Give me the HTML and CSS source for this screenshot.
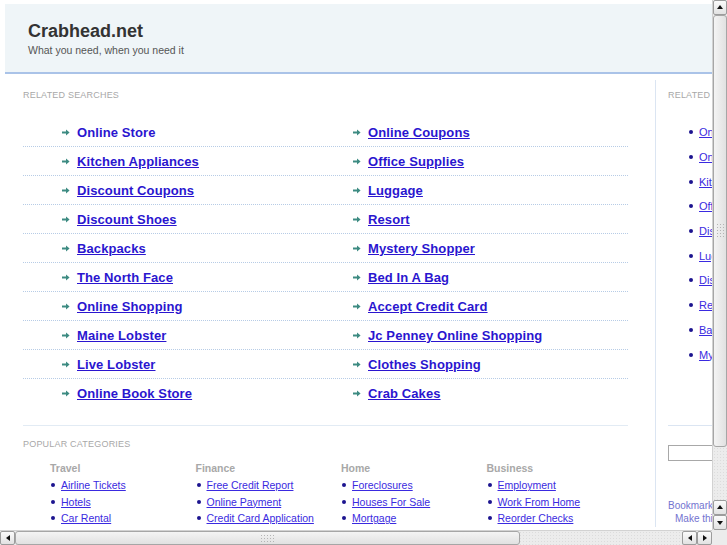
FILE: index.html
```html
<!DOCTYPE html>
<html lang="en">
<head>
  <meta charset="UTF-8" />
  <title>Crabhead.net</title>
  <link rel="stylesheet" href="styles.css">
</head>
<body>
  <div class="window">
    <div class="viewport">
      <div class="page">
        <div class="header">
          <div class="site-name">Crabhead.net</div>
          <div class="tagline">What you need, when you need it</div>
        </div>
        <div class="content">
          <div class="main">
            <div class="section-title">Related Searches</div>
            <div class="searches">
              <div class="search-row">
                <a class="search-link plain" href="#"><svg class="arrow" viewBox="0 0 8 7"><path d="M0 2.6h4V0.4L7.6 3.5 4 6.6V4.4H0z"/></svg><span>Online Store</span></a>
                <a class="search-link" href="#"><svg class="arrow" viewBox="0 0 8 7"><path d="M0 2.6h4V0.4L7.6 3.5 4 6.6V4.4H0z"/></svg><span>Online Coupons</span></a>
              </div>
              <div class="search-row">
                <a class="search-link" href="#"><svg class="arrow" viewBox="0 0 8 7"><path d="M0 2.6h4V0.4L7.6 3.5 4 6.6V4.4H0z"/></svg><span>Kitchen Appliances</span></a>
                <a class="search-link" href="#"><svg class="arrow" viewBox="0 0 8 7"><path d="M0 2.6h4V0.4L7.6 3.5 4 6.6V4.4H0z"/></svg><span>Office Supplies</span></a>
              </div>
              <div class="search-row">
                <a class="search-link" href="#"><svg class="arrow" viewBox="0 0 8 7"><path d="M0 2.6h4V0.4L7.6 3.5 4 6.6V4.4H0z"/></svg><span>Discount Coupons</span></a>
                <a class="search-link" href="#"><svg class="arrow" viewBox="0 0 8 7"><path d="M0 2.6h4V0.4L7.6 3.5 4 6.6V4.4H0z"/></svg><span>Luggage</span></a>
              </div>
              <div class="search-row">
                <a class="search-link" href="#"><svg class="arrow" viewBox="0 0 8 7"><path d="M0 2.6h4V0.4L7.6 3.5 4 6.6V4.4H0z"/></svg><span>Discount Shoes</span></a>
                <a class="search-link" href="#"><svg class="arrow" viewBox="0 0 8 7"><path d="M0 2.6h4V0.4L7.6 3.5 4 6.6V4.4H0z"/></svg><span>Resort</span></a>
              </div>
              <div class="search-row">
                <a class="search-link" href="#"><svg class="arrow" viewBox="0 0 8 7"><path d="M0 2.6h4V0.4L7.6 3.5 4 6.6V4.4H0z"/></svg><span>Backpacks</span></a>
                <a class="search-link" href="#"><svg class="arrow" viewBox="0 0 8 7"><path d="M0 2.6h4V0.4L7.6 3.5 4 6.6V4.4H0z"/></svg><span>Mystery Shopper</span></a>
              </div>
              <div class="search-row">
                <a class="search-link" href="#"><svg class="arrow" viewBox="0 0 8 7"><path d="M0 2.6h4V0.4L7.6 3.5 4 6.6V4.4H0z"/></svg><span>The North Face</span></a>
                <a class="search-link" href="#"><svg class="arrow" viewBox="0 0 8 7"><path d="M0 2.6h4V0.4L7.6 3.5 4 6.6V4.4H0z"/></svg><span>Bed In A Bag</span></a>
              </div>
              <div class="search-row">
                <a class="search-link" href="#"><svg class="arrow" viewBox="0 0 8 7"><path d="M0 2.6h4V0.4L7.6 3.5 4 6.6V4.4H0z"/></svg><span>Online Shopping</span></a>
                <a class="search-link" href="#"><svg class="arrow" viewBox="0 0 8 7"><path d="M0 2.6h4V0.4L7.6 3.5 4 6.6V4.4H0z"/></svg><span>Accept Credit Card</span></a>
              </div>
              <div class="search-row">
                <a class="search-link" href="#"><svg class="arrow" viewBox="0 0 8 7"><path d="M0 2.6h4V0.4L7.6 3.5 4 6.6V4.4H0z"/></svg><span>Maine Lobster</span></a>
                <a class="search-link" href="#"><svg class="arrow" viewBox="0 0 8 7"><path d="M0 2.6h4V0.4L7.6 3.5 4 6.6V4.4H0z"/></svg><span>Jc Penney Online Shopping</span></a>
              </div>
              <div class="search-row">
                <a class="search-link" href="#"><svg class="arrow" viewBox="0 0 8 7"><path d="M0 2.6h4V0.4L7.6 3.5 4 6.6V4.4H0z"/></svg><span>Live Lobster</span></a>
                <a class="search-link" href="#"><svg class="arrow" viewBox="0 0 8 7"><path d="M0 2.6h4V0.4L7.6 3.5 4 6.6V4.4H0z"/></svg><span>Clothes Shopping</span></a>
              </div>
              <div class="search-row">
                <a class="search-link" href="#"><svg class="arrow" viewBox="0 0 8 7"><path d="M0 2.6h4V0.4L7.6 3.5 4 6.6V4.4H0z"/></svg><span>Online Book Store</span></a>
                <a class="search-link" href="#"><svg class="arrow" viewBox="0 0 8 7"><path d="M0 2.6h4V0.4L7.6 3.5 4 6.6V4.4H0z"/></svg><span>Crab Cakes</span></a>
              </div>
            </div>

            <div class="section-title popular">Popular Categories</div>
            <div class="categories">
              <div class="category">
                <div class="cat-name">Travel</div>
                <ul class="cat-links">
                  <li><a href="#">Airline Tickets</a></li>
                  <li><a href="#">Hotels</a></li>
                  <li><a href="#">Car Rental</a></li>
                </ul>
              </div>
              <div class="category">
                <div class="cat-name">Finance</div>
                <ul class="cat-links">
                  <li><a href="#">Free Credit Report</a></li>
                  <li><a href="#">Online Payment</a></li>
                  <li><a href="#">Credit Card Application</a></li>
                </ul>
              </div>
              <div class="category">
                <div class="cat-name">Home</div>
                <ul class="cat-links">
                  <li><a href="#">Foreclosures</a></li>
                  <li><a href="#">Houses For Sale</a></li>
                  <li><a href="#">Mortgage</a></li>
                </ul>
              </div>
              <div class="category">
                <div class="cat-name">Business</div>
                <ul class="cat-links">
                  <li><a href="#">Employment</a></li>
                  <li><a href="#">Work From Home</a></li>
                  <li><a href="#">Reorder Checks</a></li>
                </ul>
              </div>
            </div>
          </div>

          <div class="side">
            <div class="section-title">Related Searches</div>
            <ul class="side-links">
              <li><a href="#">Online Store</a></li>
              <li><a href="#">Online Coupons</a></li>
              <li><a href="#">Kitchen Appliances</a></li>
              <li><a href="#">Office Supplies</a></li>
              <li><a href="#">Discount Coupons</a></li>
              <li><a href="#">Luggage</a></li>
              <li><a href="#">Discount Shoes</a></li>
              <li><a href="#">Resort</a></li>
              <li><a href="#">Backpacks</a></li>
              <li><a href="#">Mystery Shopper</a></li>
            </ul>
            <div class="side-search">
              <input class="search-box" type="text" />
            </div>
            <div class="bookmark">
              <a href="#">Bookmark this page</a>
              <a class="make-home" href="#">Make this your homepage</a>
            </div>
          </div>
        </div>
      </div>
    </div>

    <div class="vscroll">
      <div class="sb-btn"><span class="tri up"></span></div>
      <div class="sb-thumb v-thumb"><span class="grip"></span></div>
      <div class="sb-track"></div>
      <div class="sb-btn"><span class="tri up"></span></div>
      <div class="sb-btn"><span class="tri down"></span></div>
    </div>
    <div class="hscroll">
      <div class="sb-btn"><span class="tri left"></span></div>
      <div class="sb-thumb h-thumb"><span class="grip"></span></div>
      <div class="sb-track"></div>
      <div class="sb-btn"><span class="tri left"></span></div>
      <div class="sb-btn"><span class="tri right"></span></div>
    </div>
    <div class="corner"></div>
  </div>
</body>
</html>
```

FILE: styles.css
```css
body {
  margin: 0;
  padding: 0;
  overflow: hidden;
  background: #fff;
  font-family: "Liberation Sans", Arial, sans-serif;
}
.window {
  display: grid;
  grid-template-columns: 712px 15px;
  grid-template-rows: 530px 15px;
  width: 727px;
  height: 545px;
}
.viewport {
  overflow: hidden;
  background: #fff;
}
.page {
  width: 1000px;
  padding: 4px 0 0 5px;
}

/* header */
.header {
  background: #eff5f8;
  border-bottom: 2px solid #aac3e8;
  height: 70px;
  padding: 0 0 0 23px;
  box-sizing: border-box;
}
.site-name {
  padding-top: 16px;
  font-size: 18px;
  font-weight: bold;
  color: #333;
  line-height: 22px;
}
.tagline {
  font-size: 10.5px;
  color: #555;
  line-height: 14px;
  margin-top: 1px;
}

.content {
  display: flex;
}
.main {
  width: 605px;
  padding: 0 27px 0 18px;
}
.section-title {
  font-size: 9px;
  color: #a8a8a8;
  text-transform: uppercase;
  letter-spacing: 0.2px;
  line-height: 12px;
  margin-top: 15px;
  white-space: nowrap;
}
.section-title.popular {
  margin-top: 12px;
}

/* related searches */
.searches {
  margin-top: 17px;
  border-bottom: 1px solid #e2ebf4;
  padding-bottom: 17px;
}
.search-row {
  display: grid;
  grid-template-columns: 291px 1fr;
  padding-left: 39px;
  height: 29px;
  align-items: center;
  border-bottom: 1px dotted #b7cce6;
  box-sizing: border-box;
}
.search-row:last-child {
  border-bottom: none;
}
.search-link {
  display: flex;
  align-items: center;
  gap: 7px;
  font-size: 13px;
  font-weight: bold;
  color: #2a15cf;
  text-decoration: none;
  letter-spacing: 0.1px;
}
.search-link span {
  text-decoration: underline;
}
.search-link.plain span {
  text-decoration: none;
}
.arrow {
  width: 8px;
  height: 7px;
  fill: #3d8b82;
  flex-shrink: 0;
}

/* popular categories */
.categories {
  display: grid;
  grid-template-columns: repeat(4, 145.5px);
  padding-left: 27px;
  margin-top: 12px;
}
.cat-name {
  font-size: 10.5px;
  font-weight: bold;
  color: #a8a8a8;
  line-height: 13px;
}
.cat-links {
  list-style: none;
  margin: 2px 0 0 1px;
  padding: 0;
}
.cat-links li {
  display: flex;
  align-items: center;
  gap: 6px;
  height: 16.5px;
  font-size: 10.5px;
  white-space: nowrap;
}
.cat-links li::before,
.side-links li::before {
  content: "";
  width: 4px;
  height: 4px;
  border-radius: 50%;
  background: #1c148f;
  flex-shrink: 0;
}
.cat-links a {
  color: #3a2ae0;
}

/* sidebar */
.side {
  border-left: 1px solid #dbe5f2;
  margin-top: 6px;
  padding-left: 12px;
  width: 240px;
}
.side .section-title {
  margin-top: 9px;
}
.side-links {
  list-style: none;
  margin: 19px 0 0 0;
  padding: 0 0 0 21px;
}
.side-links li {
  display: flex;
  align-items: center;
  gap: 6px;
  height: 24.7px;
  font-size: 11px;
}
.side-links a {
  color: #3a2ae0;
}
.side-search {
  margin-top: 58px;
  border-top: 1px solid #dbe5f2;
  padding-top: 19px;
}
.search-box {
  display: block;
  width: 150px;
  height: 16px;
  box-sizing: border-box;
  border: 1px solid #a8a8a8;
  padding: 0;
  margin: 0;
}
.bookmark {
  margin-top: 38px;
  display: flex;
  flex-direction: column;
  font-size: 10px;
  line-height: 13px;
}
.bookmark a {
  color: #7373d0;
  text-decoration: none;
}
.bookmark .make-home {
  padding-left: 7px;
}

/* fake scrollbars */
.vscroll,
.hscroll {
  display: flex;
  background: #ececec;
  background-image: radial-gradient(#dcdcdc 0.6px, transparent 0.8px);
  background-size: 3px 3px;
}
.vscroll {
  flex-direction: column;
  border-left: 1px solid #d2d2d2;
}
.hscroll {
  border-top: 1px solid #d2d2d2;
}
.sb-btn {
  width: 15px;
  height: 15px;
  box-sizing: border-box;
  border: 1px solid #9c9c9c;
  border-radius: 2px;
  background: linear-gradient(#fbfbfb, #e2e2e2);
  display: flex;
  align-items: center;
  justify-content: center;
  flex-shrink: 0;
}
.vscroll .sb-btn {
  width: 14px;
}
.hscroll .sb-btn {
  height: 14px;
}
.tri {
  width: 0;
  height: 0;
  border: 3px solid transparent;
}
.tri.up {
  border-bottom: 4px solid #111;
  border-top-width: 0;
  margin-top: -1px;
}
.tri.down {
  border-top: 4px solid #111;
  border-bottom-width: 0;
}
.tri.left {
  border-right: 4px solid #111;
  border-left-width: 0;
}
.tri.right {
  border-left: 4px solid #111;
  border-right-width: 0;
}
.sb-thumb {
  box-sizing: border-box;
  border: 1px solid #a6a6a6;
  border-radius: 3px;
  display: flex;
  align-items: center;
  justify-content: center;
  flex-shrink: 0;
}
.v-thumb {
  height: 432px;
  width: 14px;
  background: linear-gradient(90deg, #f4f4f4, #e1e1e1);
}
.h-thumb {
  width: 505px;
  height: 14px;
  background: linear-gradient(#f4f4f4, #e1e1e1);
}
.grip {
  background-image: radial-gradient(#b4b4b4 0.7px, transparent 0.9px);
  background-size: 3px 3px;
}
.v-thumb .grip {
  width: 8px;
  height: 16px;
}
.h-thumb .grip {
  width: 16px;
  height: 8px;
}
.sb-track {
  flex: 1;
}
.corner {
  background: #ececec;
}
```
